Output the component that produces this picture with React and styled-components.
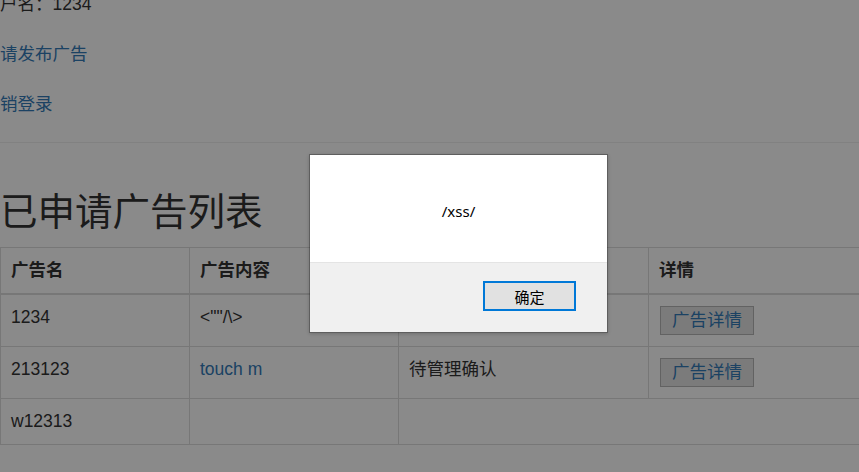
import styled, { createGlobalStyle } from "styled-components";

const GlobalStyle = createGlobalStyle`
  html, body {
    margin: 0;
    padding: 0;
    overflow: hidden;
    background: #fff;
  }
  body {
    font-family: "Liberation Sans", "Noto Sans CJK SC", sans-serif;
    font-size: 17.5px;
    line-height: 25px;
    color: #333;
  }
`;

const ads = [
  { name: "1234", content: '<""/\\>', status: "待管理确认", detail: true },
  { name: "213123", content: "touch m", link: true, status: "待管理确认", detail: true },
  { name: "w12313", content: "", status: "", detail: false },
];

const App = () => {
  return (
    <>
      <GlobalStyle />
      <Page>
        <UserInfo>
          <InfoLine>用户名：1234</InfoLine>
          <InfoLine>
            <Link href="#">申请发布广告</Link>
          </InfoLine>
          <InfoLine>
            <Link href="#">注销登录</Link>
          </InfoLine>
        </UserInfo>
        <Rule />
        <Title>已申请广告列表</Title>
        <AdTable>
          <colgroup>
            <col style={{ width: 189 }} />
            <col style={{ width: 209 }} />
            <col style={{ width: 250 }} />
            <col />
          </colgroup>
          <thead>
            <tr>
              <Th>广告名</Th>
              <Th>广告内容</Th>
              <Th>广告状态</Th>
              <Th>详情</Th>
            </tr>
          </thead>
          <tbody>
            {ads.map((ad, i) => (
              <tr key={i}>
                <Td>{ad.name}</Td>
                <Td>{ad.link ? <Link href="#">{ad.content}</Link> : ad.content}</Td>
                {ad.detail ? (
                  <>
                    <Td>{ad.status}</Td>
                    <Td>
                      <DetailButton>
                        <Link href="#">广告详情</Link>
                      </DetailButton>
                    </Td>
                  </>
                ) : (
                  <Td colSpan={2} />
                )}
              </tr>
            ))}
          </tbody>
        </AdTable>
      </Page>

      <Backdrop />
      <AlertBox>
        <AlertBody>/xss/</AlertBody>
        <AlertFooter>
          <OkButton>确定</OkButton>
        </AlertFooter>
      </AlertBox>
    </>
  );
};

const Page = styled.div`
  width: 100vw;
  height: 100vh;
  overflow: hidden;
  margin-top: -8.5px;
`;

const UserInfo = styled.div`
  margin-left: -17.5px;
`;

const InfoLine = styled.div`
  line-height: 25px;
  margin-bottom: 25px;

  &:last-child {
    margin-bottom: 0;
  }
`;

const Link = styled.a`
  color: #337ab7;
  text-decoration: none;
`;

const Rule = styled.hr`
  margin: 25.5px 0 0;
  border: 0;
  border-top: 1px solid #eee;
`;

const Title = styled.h2`
  margin: 48.5px 0 14px;
  font-size: 37.5px;
  line-height: 41.25px;
  font-weight: 400;
  color: #333;
`;

const AdTable = styled.table`
  width: 1100px;
  table-layout: fixed;
  border-collapse: collapse;
  border: 1px solid #ddd;
`;

const Th = styled.th`
  padding: 10px;
  text-align: left;
  font-weight: bold;
  line-height: 25px;
  border: 1px solid #ddd;
  border-bottom: 2px solid #ddd;
`;

const Td = styled.td`
  padding: 10px;
  vertical-align: top;
  line-height: 25px;
  border: 1px solid #ddd;
  height: 25px;
`;

const DetailButton = styled.button`
  display: inline-block;
  margin: 1px 0 1px 1px;
  padding: 1px 11px;
  font-family: "Liberation Sans", "Noto Sans CJK SC", sans-serif;
  font-size: 17.5px;
  line-height: 25px;
  background: #e4e4e4;
  border: 1px solid #b5b5b5;
  border-radius: 0;
  vertical-align: top;
`;

const Backdrop = styled.div`
  position: fixed;
  inset: 0;
  background: rgba(0, 0, 0, 0.46);
`;

const AlertBox = styled.div`
  position: fixed;
  left: 309px;
  top: 154px;
  width: 299px;
  height: 179px;
  box-sizing: border-box;
  border: 1px solid rgba(0, 0, 0, 0.32);
  box-shadow: 0 1px 4px rgba(0, 0, 0, 0.2);
  display: flex;
  flex-direction: column;
  font-family: "Noto Sans", "Noto Sans CJK SC", sans-serif;
  color: #000;
`;

const AlertBody = styled.div`
  height: 108px;
  background: #fff;
  border-bottom: 1px solid #e4e4e4;
  display: flex;
  align-items: center;
  justify-content: center;
  padding-top: 4px;
  box-sizing: border-box;
  font-size: 15px;
  line-height: 20px;
`;

const AlertFooter = styled.div`
  flex: 1;
  background: #f0f0f0;
  display: flex;
  justify-content: flex-end;
  align-items: flex-start;
  padding: 18px 31px 0 0;
`;

const OkButton = styled.button`
  width: 93px;
  height: 30px;
  box-sizing: border-box;
  background: #e1e1e1;
  border: 2px solid #0078d7;
  border-radius: 0;
  padding: 0;
  font-family: "Noto Sans", "Noto Sans CJK SC", sans-serif;
  font-size: 15px;
  color: #000;
`;

export default App;
